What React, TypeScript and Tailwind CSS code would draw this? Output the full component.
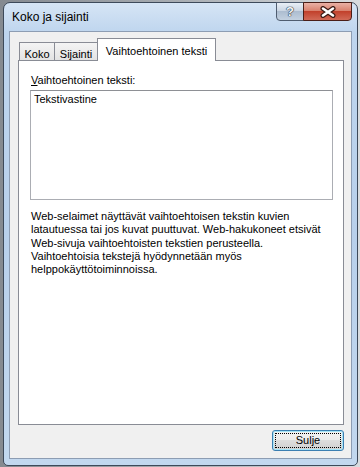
import React from 'react';

const font = "font-['Liberation_Sans',Arial,sans-serif]";

// Close "X" drawn as a white cross with a dark rim
const CloseGlyph = () => (
  <svg width="18" height="12" viewBox="0 0 18 12">
    <path d="M4 2.5 L14 9.5 M14 2.5 L4 9.5" stroke="#3b1a14" strokeWidth="5" strokeLinecap="round" />
    <path d="M4 2.5 L14 9.5 M14 2.5 L4 9.5" stroke="#ffffff" strokeWidth="2.6" strokeLinecap="round" />
  </svg>
);

const Tab: React.FC<{ label: string; active?: boolean; width: string }> = ({ label, active, width }) =>
  active ? (
    <div
      className={`relative z-10 -ml-px -mb-px h-[23px] ${width} border border-b-0 border-[#898c95] bg-white flex items-start justify-center pt-[4px] text-[11px] text-black`}
    >
      {label}
    </div>
  ) : (
    <div
      className={`-ml-px first:ml-0 h-[18px] ${width} border border-b-0 border-[#898c95] bg-[linear-gradient(to_bottom,#f4f4f4,#e3e3e3)] flex items-start justify-center pt-[3px] text-[11px] text-black`}
    >
      {label}
    </div>
  );

export default function App() {
  return (
    <div className={`w-[360px] h-[467px] overflow-hidden bg-[linear-gradient(to_right,#858a90,#a8adb2_50%,#d9dcdf)] pt-[2px] pl-[3px] ${font}`}>
      <div className="w-[355px] h-[464px] rounded-t-[7px] rounded-b-[5px] border border-[#3d4a5a] bg-[linear-gradient(to_bottom,#d6e5f5,#bed5ee_30px,#b8d0eb_50%,#c2d8ef)] flex flex-col px-[5px] pb-[6px]">
        {/* title bar */}
        <div className="h-[28px] flex items-start shrink-0">
          <div className="ml-[3px] mt-[7px] text-[12px] leading-[15px] text-black">Koko ja sijainti</div>
          <div className="ml-auto -mt-px mr-[0px] flex">
            <div className="w-[28px] h-[19px] rounded-bl-[4px] border border-[#4f5d70] bg-[linear-gradient(to_bottom,#e9eff6,#cbd6e3_45%,#adbdd0_50%,#c3d1e0)] flex items-center justify-center">
              <span className="text-[13px] font-bold leading-none text-[#f4f6f9] [text-shadow:0_0_1px_#243040,0_0_1px_#243040,0_0_1px_#243040]">?</span>
            </div>
            <div className="-ml-px w-[49px] h-[19px] rounded-br-[4px] border border-[#4a1e17] bg-[linear-gradient(to_bottom,#eab1a5,#d9826f_45%,#c2412c_50%,#d16a57)] flex items-center justify-center">
              <CloseGlyph />
            </div>
          </div>
        </div>

        {/* client area */}
        <div className="flex-1 border border-[#8d9db3] bg-[#f0f0f0] flex flex-col pl-[8px] pr-[7px] pt-[6px] pb-[7px]">
          <div className="h-[22px] flex items-end pl-px shrink-0">
            <Tab label="Koko" width="w-[36px]" />
            <Tab label="Sijainti" width="w-[44px]" />
            <Tab label="Vaihtoehtoinen teksti" width="w-[119px]" active />
          </div>

          <div className="flex-1 border border-[#898c95] bg-white pl-[11px] pr-[10px] pt-[13px] text-[11px] text-black">
            <div className="ml-px h-[13px] leading-[13px]">
              <span className="underline underline-offset-[1px]">V</span>aihtoehtoinen teksti:
            </div>
            <div className="mt-[3px] h-[110px] border border-[#abadb3] border-t-[#8e9095] bg-white px-[3px] pt-[2px] leading-[13px]">
              Tekstivastine
            </div>
            <p className="mt-[10px] ml-px leading-[13.33px] whitespace-nowrap">
              Web-selaimet näyttävät vaihtoehtoisen tekstin kuvien
              <br />
              latautuessa tai jos kuvat puuttuvat. Web-hakukoneet etsivät
              <br />
              Web-sivuja vaihtoehtoisten tekstien perusteella.
              <br />
              Vaihtoehtoisia tekstejä hyödynnetään myös
              <br />
              helppokäyttötoiminnoissa.
            </p>
          </div>

          <div className="mt-[5px] flex justify-end shrink-0">
            <button className="w-[72px] h-[21px] rounded-[3px] border border-[#3c7fb1] shadow-[inset_0_0_0_1px_#a6e4f7] bg-[linear-gradient(to_bottom,#f3f3f3,#ebebeb_50%,#dddddd_50%,#cfcfcf)] text-[11px] text-black leading-none [outline:1px_dotted_#000] [outline-offset:-4px]">
              Sulje
            </button>
          </div>
        </div>
      </div>
    </div>
  );
}
